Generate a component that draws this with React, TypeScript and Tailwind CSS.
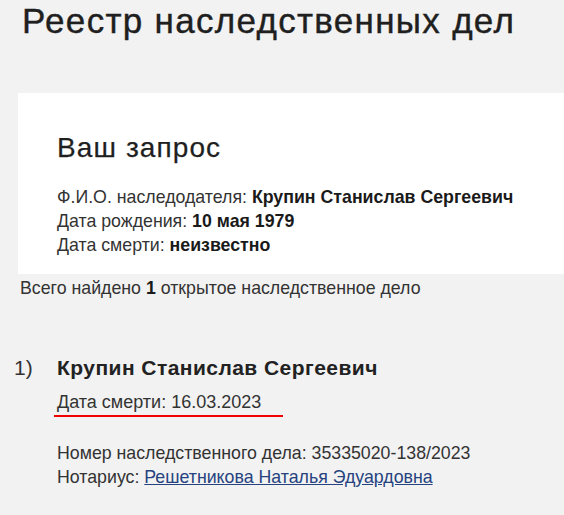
export default function App() {
  return (
    <div className="min-h-[515px] w-[564px] overflow-hidden bg-[#f2f2f2] pt-[1px] font-['Liberation_Sans',Arial,sans-serif] text-[#333]">
      <h1 className="pl-[22px] text-[35px] leading-[40px] tracking-[1.3px] text-[#1f1f1f] [-webkit-text-stroke:0.4px_#1f1f1f]">
        Реестр наследственных дел
      </h1>

      <section className="ml-[18px] mt-[52px] bg-white pb-[17px] pl-[39px] pt-[38px]">
        <h2 className="text-[28px] leading-[34px] tracking-[1.1px] text-[#1f1f1f] [-webkit-text-stroke:0.25px_#1f1f1f]">
          Ваш запрос
        </h2>
        <div className="mt-[19.5px] text-[17.75px] leading-[24px]">
          <p>
            Ф.И.О. наследодателя: <b className="text-[#1a1a1a]">Крупин Станислав Сергеевич</b>
          </p>
          <p>
            Дата рождения: <b className="text-[#1a1a1a]">10 мая 1979</b>
          </p>
          <p>
            Дата смерти: <b className="text-[#1a1a1a]">неизвестно</b>
          </p>
        </div>
      </section>

      <p className="mt-[2px] pl-[20px] text-[17.75px] leading-[24px]">
        Всего найдено <b className="text-[#1a1a1a]">1</b> открытое наследственное дело
      </p>

      <div className="mt-[53px] flex">
        <div className="w-[57px] pl-[14px] text-[21px] leading-[30px]">1)</div>
        <div>
          <h3 className="text-[21px] font-bold leading-[30px] tracking-[0.45px] text-[#222]">
            Крупин Станислав Сергеевич
          </h3>
          <p className="-ml-[3px] mt-[7px] inline-block border-b-2 border-[#f00000] pb-[1px] pl-[3px] pr-[22px] text-[18px] leading-[24px]">
            Дата смерти: 16.03.2023
          </p>
          <div className="mt-[24px] text-[17.75px] leading-[24px]">
            <p>Номер наследственного дела: 35335020-138/2023</p>
            <p>
              Нотариус:{" "}
              <a href="#" className="text-[#26437f] underline">
                Решетникова Наталья Эдуардовна
              </a>
            </p>
          </div>
        </div>
      </div>
    </div>
  );
}
